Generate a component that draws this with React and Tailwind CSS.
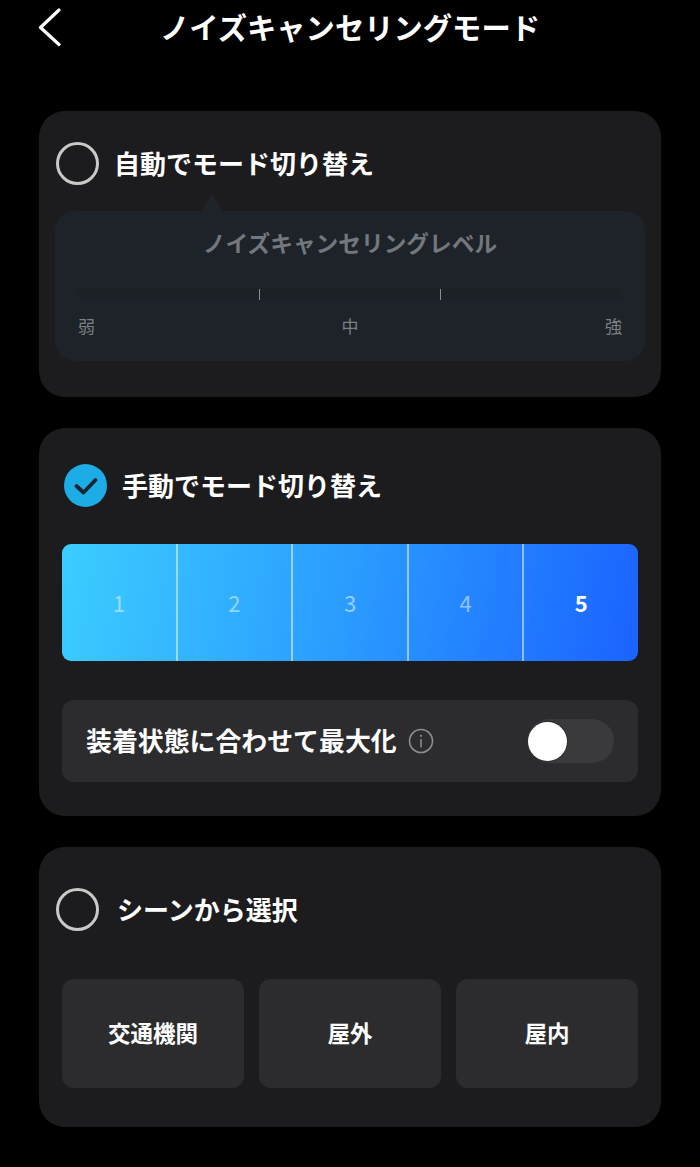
import React from 'react';

const fontStack = "font-['Noto_Sans_CJK_JP','Noto_Sans',sans-serif]";

const Radio = () => (
    <div className="w-[43px] h-[43px] rounded-full border-[3px] border-[#c9c9c9] shrink-0" />
);

const CheckedRadio = () => (
    <div className="w-[43px] h-[43px] rounded-full bg-[#1cade6] shrink-0 flex items-center justify-center">
        <svg width="26" height="20" viewBox="0 0 26 20" fill="none">
            <path d="M3.5 10 L10.5 16.5 L22.5 4" stroke="#1b2530" strokeWidth="3.8" strokeLinecap="round" strokeLinejoin="round" />
        </svg>
    </div>
);

const LevelPanel = () => (
    <div className="relative mt-[26px] h-[150px] rounded-[20px] bg-[#1d2329] px-[23px] pt-[16px]">
        {/* pointer above the panel */}
        <div className="absolute left-[146px] top-[-17px] w-0 h-0 border-x-[11px] border-x-transparent border-b-[17px] border-b-[#1d2329]" />
        <div className="text-center text-[22.7px] leading-[32px] font-bold text-[#73777e]">ノイズキャンセリングレベル</div>
        <div className="mt-[30px] h-[11px] rounded-full bg-[#1c2126] flex items-center justify-evenly px-[2px]">
            <span className="w-px h-[11px] bg-[#8b8d90]" />
            <span className="w-px h-[11px] bg-[#8b8d90]" />
        </div>
        <div className="mt-[14px] flex justify-between text-[17px] leading-[24px] text-[#7c7f83]">
            <span>弱</span>
            <span>中</span>
            <span>強</span>
        </div>
    </div>
);

const segments = [1, 2, 3, 4, 5];

const LevelSelector = () => (
    <div className="mt-[37px] mx-[23px] h-[117px] rounded-[9px] overflow-hidden flex bg-[linear-gradient(100deg,#3ccdff_0%,#2a9bff_50%,#1b63ff_100%)]">
        {segments.map((n) => (
            <div
                key={n}
                className={
                    n === 5
                        ? 'flex-1 flex items-center justify-center text-[22px] font-bold text-white'
                        : 'flex-1 flex items-center justify-center text-[22px] text-white/50 border-r-2 border-white/50'
                }
            >
                {n}
            </div>
        ))}
    </div>
);

const Toggle = () => (
    <div className="ml-auto w-[87px] h-[44px] rounded-full bg-[#3a3a3c] flex items-center">
        <div className="w-[39px] h-[39px] ml-[1px] rounded-full bg-white shadow-[0_0_2px_rgba(0,0,0,0.6)]" />
    </div>
);

const InfoIcon = () => (
    <svg width="26" height="26" viewBox="0 0 26 26" fill="none" className="ml-[11px]">
        <circle cx="13" cy="13" r="11.5" stroke="#8e8e8e" strokeWidth="1.6" />
        <circle cx="13" cy="7.8" r="1.1" fill="#8e8e8e" />
        <path d="M13 11 V19.5" stroke="#8e8e8e" strokeWidth="1.5" />
    </svg>
);

const scenes = ['交通機関', '屋外', '屋内'];

const App = () => {
    return (
        <div className={`w-[700px] h-[1167px] overflow-hidden bg-black text-white ${fontStack}`}>
            {/* Header */}
            <div className="relative h-[54px] flex items-center justify-center">
                <svg width="24" height="40" viewBox="0 0 24 40" fill="none" className="absolute left-[38px] top-[8px]">
                    <path d="M21 2 L2.5 19.5 L21 36.5" stroke="white" strokeWidth="3.2" strokeLinecap="round" strokeLinejoin="round" />
                </svg>
                <h1 className="pb-[3px] text-[29.3px] leading-[40px] font-bold">ノイズキャンセリングモード</h1>
            </div>

            <div className="mt-[57px] mx-[39px] flex flex-col gap-[31px]">
                {/* Auto mode */}
                <section className="h-[286px] rounded-[26px] bg-[#1c1c1e] px-[16px] pt-[31px]">
                    <div className="flex items-center pl-[1px]">
                        <Radio />
                        <span className="ml-[15px] pb-[3px] text-[26px] leading-[39px] font-bold">自動でモード切り替え</span>
                    </div>
                    <LevelPanel />
                </section>

                {/* Manual mode */}
                <section className="h-[388px] rounded-[26px] bg-[#1c1c1e] pt-[36px]">
                    <div className="flex items-center pl-[25px]">
                        <CheckedRadio />
                        <span className="ml-[15px] pb-[3px] text-[26px] leading-[39px] font-bold">手動でモード切り替え</span>
                    </div>
                    <LevelSelector />
                    <div className="mt-[39px] mx-[23px] h-[82px] rounded-[12px] bg-[#2c2c2e] flex items-center pl-[24px] pr-[24px]">
                        <span className="pb-[2px] text-[25.9px] leading-[36px] font-bold">装着状態に合わせて最大化</span>
                        <InfoIcon />
                        <Toggle />
                    </div>
                </section>

                {/* Scene mode */}
                <section className="h-[280px] rounded-[26px] bg-[#1c1c1e] pt-[41px]">
                    <div className="flex items-center pl-[17px]">
                        <Radio />
                        <span className="ml-[18px] pb-[3px] text-[26px] leading-[39px] font-bold">シーンから選択</span>
                    </div>
                    <div className="mt-[48px] mx-[23px] grid grid-cols-3 gap-[15px]">
                        {scenes.map((scene) => (
                            <div key={scene} className="h-[109px] rounded-[12px] bg-[#2c2c2e] flex items-center justify-center pb-[2px] text-[22.5px] font-bold">
                                {scene}
                            </div>
                        ))}
                    </div>
                </section>
            </div>
        </div>
    );
};

export default App;
